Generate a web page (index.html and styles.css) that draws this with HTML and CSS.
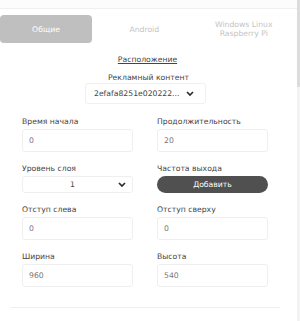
FILE: index.html
```html
<!DOCTYPE html>
<html lang="ru">
<head>
<meta charset="utf-8">
<link rel="stylesheet" href="styles.css">
</head>
<body>
<div class="frame">
  <div class="main">
    <div class="topbar"></div>
    <div class="tabs">
      <div class="tab active">Общие</div>
      <div class="tab">Android</div>
      <div class="tab">Windows Linux<br>Raspberry Pi</div>
    </div>
    <div class="section-title">Расположение</div>
    <div class="content-label">Рекламный контент</div>
    <div class="content-select">
      <span>2efafa8251e020222...</span>
      <svg class="chev" width="8" height="5" viewBox="0 0 8 5"><polyline points="1,1 4,4 7,1" fill="none" stroke="#2b2b2b" stroke-width="1.7"/></svg>
    </div>
    <div class="fields">
      <div class="field">
        <div class="label">Время начала</div>
        <div class="input">0</div>
      </div>
      <div class="field">
        <div class="label">Продолжительность</div>
        <div class="input">20</div>
      </div>
      <div class="field">
        <div class="label">Уровень слоя</div>
        <div class="select">
          <span class="sel-val">1</span>
          <svg class="chev" width="8" height="5" viewBox="0 0 8 5"><polyline points="1,1 4,4 7,1" fill="none" stroke="#2b2b2b" stroke-width="1.7"/></svg>
        </div>
      </div>
      <div class="field">
        <div class="label">Частота выхода</div>
        <div class="button">Добавить</div>
      </div>
      <div class="field">
        <div class="label">Отступ слева</div>
        <div class="input">0</div>
      </div>
      <div class="field">
        <div class="label">Отступ сверху</div>
        <div class="input">0</div>
      </div>
      <div class="field">
        <div class="label">Ширина</div>
        <div class="input">960</div>
      </div>
      <div class="field">
        <div class="label">Высота</div>
        <div class="input">540</div>
      </div>
    </div>
    <div class="divider"></div>
  </div>
  <div class="scrollbar"><div class="thumb"></div></div>
</div>
</body>
</html>
```
FILE: styles.css
```css
html, body {
  margin: 0;
  padding: 0;
  background: #ffffff;
}
body {
  width: 300px;
  height: 321px;
  overflow: hidden;
  font-family: "DejaVu Sans", "Liberation Sans", sans-serif;
  font-size: 7.7px;
  color: #444444;
}
.frame {
  display: flex;
  height: 321px;
}
.main {
  flex: 1;
  display: flex;
  flex-direction: column;
}
.topbar {
  height: 8px;
  background: #fcfcfc;
  border-bottom: 1px solid #f0f0f0;
}
.tabs {
  margin-top: 6px;
  width: 291px;
  display: grid;
  grid-template-columns: 92px 1fr 1fr;
  column-gap: 5px;
}
.tab {
  height: 28px;
  display: flex;
  align-items: center;
  justify-content: center;
  text-align: center;
  color: #c4c4c4;
  line-height: 9px;
}
.tab.active {
  background: #bfbfbf;
  color: #ffffff;
  border-radius: 4px;
}
.section-title {
  margin-top: 12px;
  align-self: center;
  margin-left: -2px;
  line-height: 10px;
  text-decoration: underline;
  color: #444444;
}
.content-label {
  margin-top: 8px;
  align-self: center;
  line-height: 10px;
  color: #444444;
}
.content-select {
  align-self: center;
  margin-left: -6px;
  width: 121px;
  height: 21px;
  box-sizing: border-box;
  border: 1px solid #f0f0f0;
  border-radius: 3px;
  display: flex;
  align-items: center;
  padding-left: 8px;
  gap: 7px;
  color: #444444;
}
.chev {
  display: block;
}
.fields {
  margin-top: 13px;
  margin-left: 22px;
  width: 246px;
  display: grid;
  grid-template-columns: 111px 111px;
  column-gap: 24px;
  row-gap: 12px;
}
.label {
  line-height: 10px;
  margin-bottom: 2px;
  color: #444444;
}
.input {
  height: 23px;
  box-sizing: border-box;
  border: 1px solid #efefef;
  border-radius: 3px;
  display: flex;
  align-items: center;
  padding-left: 6px;
  color: #777777;
}
.select {
  height: 17px;
  box-sizing: border-box;
  border: 1px solid #efefef;
  border-radius: 3px;
  display: flex;
  align-items: center;
  padding-right: 6px;
}
.sel-val {
  flex: 1;
  text-align: center;
  padding-left: 4px;
  color: #444444;
}
.button {
  height: 17px;
  border-radius: 9px;
  background: #505050;
  color: #ffffff;
  display: flex;
  align-items: center;
  justify-content: center;
}
.divider {
  margin-top: 20px;
  margin-left: 10px;
  width: 270px;
  height: 1px;
  background: #f0f0f0;
}
.scrollbar {
  width: 3px;
  background: #f3f3f3;
}
.thumb {
  height: 87px;
  background: #dcdcdc;
}
```
